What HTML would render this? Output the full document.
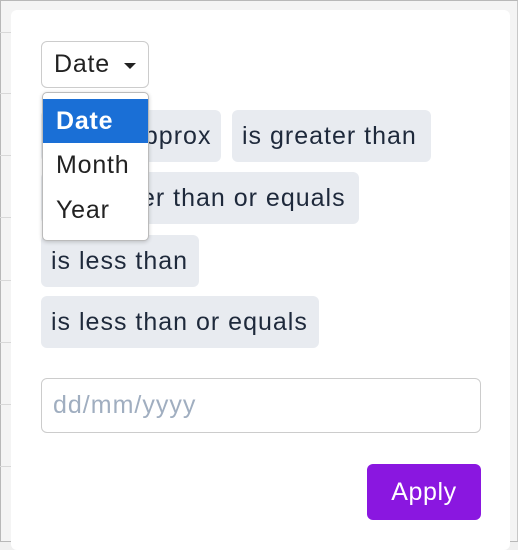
<!DOCTYPE html>
<html><head><style>
body{margin:0;width:518px;height:540px;overflow:hidden;background:#f0f0f0;font-family:"Liberation Sans",sans-serif;position:relative}
.frame{position:absolute;left:0;top:0;width:516px;height:540px;border:1px solid #b8b8b8;border-right:2px solid #c8c8c8;background:#f4f4f4}
.gl{position:absolute;left:0;width:11px;height:1px;background:#d8d8d8}
.card{position:absolute;left:11px;top:10px;width:499px;height:540px;background:#fff;border-radius:6px}
.sel{position:absolute;left:41px;top:41px;width:108px;height:47px;border:1px solid #ccc;border-radius:6px;box-sizing:border-box;font-size:25px;letter-spacing:0.8px;color:#222;line-height:45px;padding-left:12px}
.sel:after{content:"";position:absolute;left:82px;top:21px;border:6px solid transparent;border-top:6px solid #222;border-bottom:none}
.chip{position:absolute;height:52px;background:#e8ebf0;border-radius:6px;font-size:25px;letter-spacing:1px;color:#1e293b;line-height:52px;padding:0 10px;box-sizing:border-box;white-space:nowrap;overflow:hidden}
.dd{position:absolute;left:42px;top:92px;width:107px;height:149px;background:#fff;border:1px solid #bbb;border-radius:5px;box-sizing:border-box;box-shadow:0 1px 4px rgba(0,0,0,.2);font-size:25px;letter-spacing:0.8px;color:#222;overflow:hidden}
.dd div{height:45px;line-height:45px;padding-left:13px}
.inp{position:absolute;left:41px;top:378px;width:440px;height:55px;border:1px solid #ccc;border-radius:6px;box-sizing:border-box;font-size:25px;letter-spacing:1px;color:#a0aec0;line-height:53px;padding-left:11px}
.btn{position:absolute;left:367px;top:464px;width:114px;height:56px;background:#8a17e0;border-radius:6px;color:#fff;font-size:25px;letter-spacing:0.6px;text-align:center;line-height:56px}
</style></head><body>
<div class="frame"></div>
<div class="gl" style="top:32px"></div><div class="gl" style="top:93px"></div><div class="gl" style="top:155px"></div><div class="gl" style="top:217px"></div><div class="gl" style="top:280px"></div><div class="gl" style="top:342px"></div><div class="gl" style="top:404px"></div><div class="gl" style="top:466px"></div>
<div class="card"></div>
<div class="sel">Date</div>
<div class="chip" style="left:41px;top:110px;width:180px;word-spacing:50px">is approx</div>
<div class="chip" style="left:232px;top:110px;width:199px">is greater than</div>
<div class="chip" style="left:41px;top:172px;width:318px">is greater than or equals</div>
<div class="chip" style="left:41px;top:235px;width:158px">is less than</div>
<div class="chip" style="left:41px;top:296px;width:278px">is less than or equals</div>
<div class="dd"><div style="margin-top:6px;background:#1a6fd6;color:#fff;font-weight:bold;height:44px;line-height:44px">Date</div><div>Month</div><div>Year</div></div>
<div class="inp">dd/mm/yyyy</div>
<div class="btn">Apply</div>
</body></html>
